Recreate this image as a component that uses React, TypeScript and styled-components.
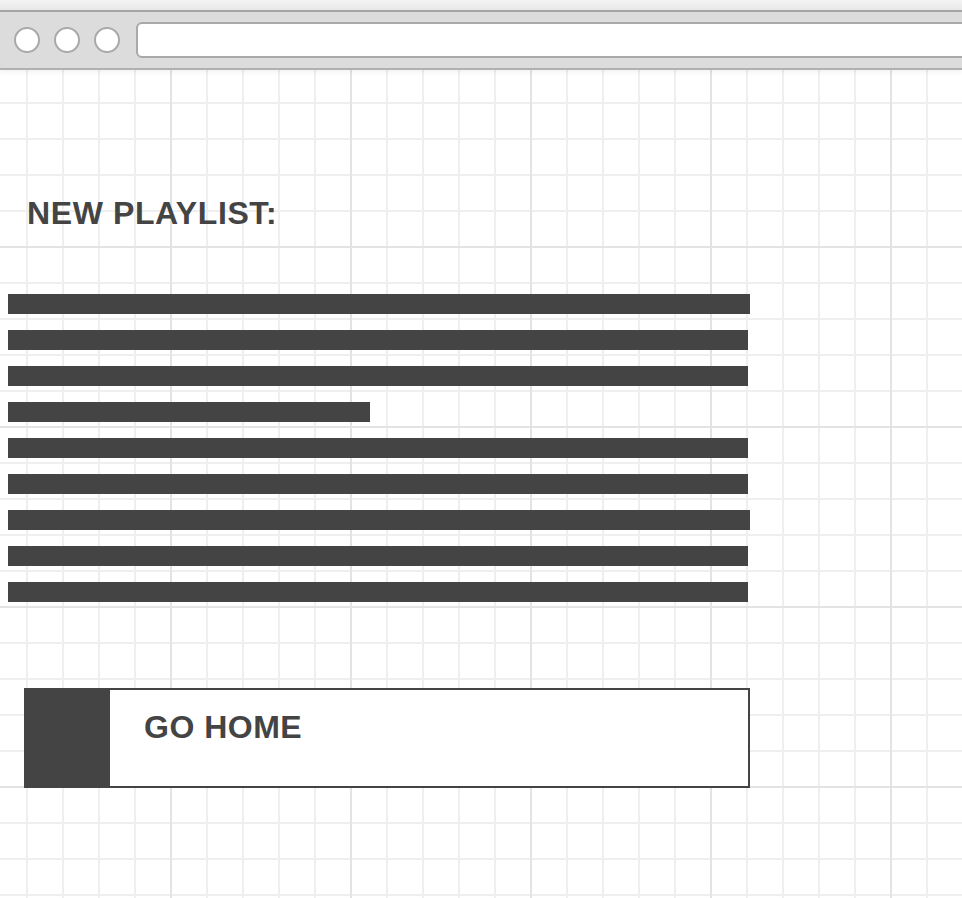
import styled, { createGlobalStyle } from 'styled-components';

const GlobalStyle = createGlobalStyle`
  html, body {
    margin: 0;
    padding: 0;
  }
  body {
    font-family: "Liberation Sans", Arial, sans-serif;
    background-color: #fff;
    background-image:
      linear-gradient(to right, #e3e3e3 0 2px, transparent 2px),
      linear-gradient(to bottom, #e3e3e3 0 2px, transparent 2px),
      linear-gradient(to right, #efefef 0 2px, transparent 2px),
      linear-gradient(to bottom, #efefef 0 2px, transparent 2px);
    background-size: 180px 180px, 180px 180px, 36px 36px, 36px 36px;
    background-position: 170px 0, 0 66px, 26px 0, 0 66px;
    min-height: 898px;
  }
`;

const Page = styled.div`
  display: flex;
  flex-direction: column;
  min-height: 898px;
`;

const Chrome = styled.header`
  display: flex;
  flex-direction: column;
  background: linear-gradient(to bottom, #f4f4f4, #e8e8e8 10px, #e8e8e8);
  padding-top: 10px;
  box-shadow: 0 2px 5px rgba(0, 0, 0, 0.06);
`;

const Toolbar = styled.div`
  display: flex;
  align-items: center;
  height: 56px;
  padding-left: 14px;
  background: #dcdcdc;
  border-top: 2px solid #a6a6a6;
  border-bottom: 2px solid #b0b0b0;
`;

const Dot = styled.span`
  width: 26px;
  height: 26px;
  box-sizing: border-box;
  border-radius: 50%;
  background: #fff;
  border: 2px solid #a9a9a9;
  margin-right: 14px;
  flex: none;
`;

const UrlField = styled.div`
  flex: 1;
  height: 36px;
  box-sizing: border-box;
  margin-left: 2px;
  margin-right: -10px;
  background: #fff;
  border: 2px solid #a9a9a9;
  border-radius: 6px;
`;

const Main = styled.main`
  display: flex;
  flex-direction: column;
  align-items: flex-start;
  padding-left: 8px;
`;

const Heading = styled.h1`
  margin: 127px 0 0 19px;
  font-size: 32px;
  line-height: 32px;
  font-weight: 700;
  letter-spacing: 0.6px;
  color: #444;
`;

const Lines = styled.div`
  display: flex;
  flex-direction: column;
  gap: 16px;
  margin-top: 65px;
`;

const Line = styled.div<{ $w: number }>`
  width: ${(p) => p.$w}px;
  height: 20px;
  background: #444;
`;

const HomeButton = styled.button`
  display: flex;
  align-items: flex-start;
  margin: 86px 0 0 16px;
  width: 726px;
  height: 100px;
  box-sizing: border-box;
  padding: 0;
  background: #fff;
  border: 2px solid #444;
  font-family: inherit;
  cursor: pointer;
`;

const Swatch = styled.span`
  align-self: stretch;
  width: 84px;
  background: #444;
  flex: none;
`;

const Label = styled.span`
  margin: 21px 0 0 34px;
  font-size: 32px;
  line-height: 32px;
  font-weight: 700;
  letter-spacing: 0.5px;
  color: #444;
`;

const lineWidths = [742, 740, 740, 362, 740, 740, 742, 740, 740];

export default function App() {
  return (
    <>
      <GlobalStyle />
      <Page>
        <Chrome>
          <Toolbar>
            <Dot />
            <Dot />
            <Dot />
            <UrlField />
          </Toolbar>
        </Chrome>
        <Main>
          <Heading>NEW PLAYLIST:</Heading>
          <Lines>
            {lineWidths.map((w, i) => (
              <Line key={i} $w={w} />
            ))}
          </Lines>
          <HomeButton>
            <Swatch />
            <Label>GO HOME</Label>
          </HomeButton>
        </Main>
      </Page>
    </>
  );
}
